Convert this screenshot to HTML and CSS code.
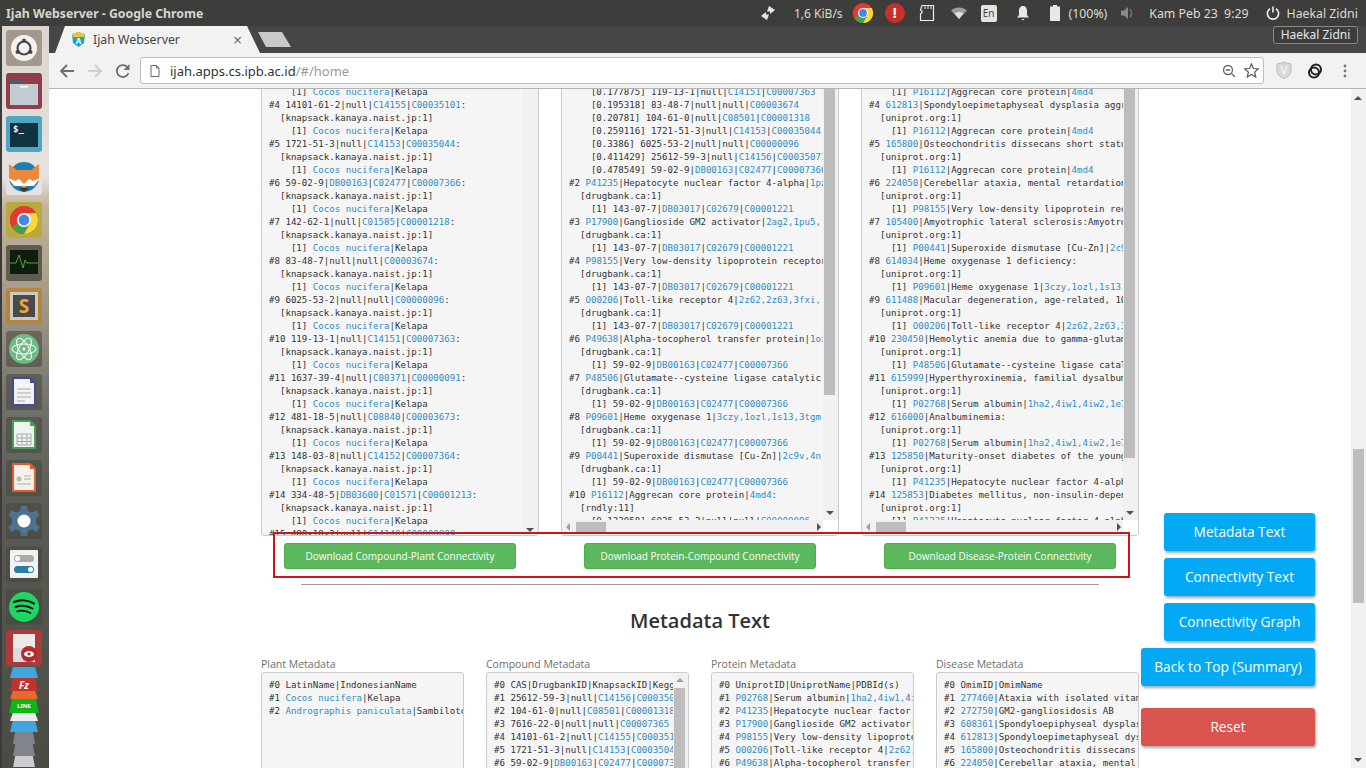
FILE: index.html
```html
<!DOCTYPE html>
<html lang="id">
<head>
	<meta charset="UTF-8">
	<title>Ijah Webserver - Google Chrome</title>
	<link rel="stylesheet" href="styles.css">
</head>
<body>
	<svg class="defs" width="0" height="0">
		<symbol id="chrome-logo" viewBox="0 0 36 36">
			<circle cx="18" cy="18" r="14" fill="#e53935"/>
			<path d="M18 18 L6 25 A14 14 0 0 1 6 11 Z" fill="#e53935"/>
			<path d="M18 18 L5.9 25 A14 14 0 0 0 25 30.1 L31 12 Z" fill="#43a047"/>
			<path d="M18 11 H30.1 A14 14 0 0 1 18 32 L25 20 Z" fill="#fdd835"/>
			<circle cx="18" cy="18" r="7" fill="#fff"/>
			<circle cx="18" cy="18" r="5.4" fill="#4a86e8"/>
		</symbol>
	</svg>

	<!-- ubuntu top panel -->
	<div class="topbar">
		<div class="win-title">Ijah Webserver - Google Chrome</div>
		<div class="indicators">
			<svg class="ind ind-arrows" width="16" height="16" viewBox="0 0 16 16"><path d="M9 1 L15 5 L10 9 V6.5 L7 6.5 Z M7 15 L1 11 L6 7 V9.5 L9 9.5 Z" fill="#e6e6e6"/></svg>
			<span class="ind-text net">1,6 KiB/s</span>
			<svg class="ind ind-chrome" width="26" height="26"><use href="#chrome-logo"/></svg>
			<span class="ind-alert">!</span>
			<svg class="ind ind-sd" width="16" height="18" viewBox="0 0 16 18"><path d="M3 1.5 H14.5 V16.5 H1.5 V10 L3 8.5 V7 L1.5 6 Z" fill="none" stroke="#eee" stroke-width="1.2"/><path d="M6 2 V5 M9 2 V5 M12 2 V5" stroke="#eee"/></svg>
			<svg class="ind ind-wifi" width="16" height="12" viewBox="0 0 16 12"><path d="M0 3.5 C4 -0.5 12 -0.5 16 3.5 L8 12 Z" fill="#9b9b9b"/><path d="M3.5 6.5 C6 4.5 10 4.5 12.5 6.5 L8 12 Z" fill="#e0e0e0"/></svg>
			<span class="ind-lang">En</span>
			<svg class="ind ind-bell" width="14" height="16" viewBox="0 0 14 16"><path d="M7 1 C10 1 11 3.500 11 6 V10 L13 12.500 H1 L3 10 V6 C3 3.500 4 1 7 1 Z M5.500 14 H8.500 L7 15.500 Z" fill="#e8e8e8"/></svg>
			<svg class="ind ind-batt" width="10" height="16" viewBox="0 0 10 16"><path d="M3 0 H7 V1.500 H10 V16 H0 V1.500 H3 Z" fill="#e8e8e8"/></svg>
			<span class="ind-text pct">(100%)</span>
			<svg class="ind ind-vol" width="14" height="14" viewBox="0 0 14 14"><path d="M0 4.500 H3 L7 1 V13 L3 9.500 H0 Z" fill="#8a8a8a"/><path d="M9 3 C11 5 11 9 9 11" stroke="#777" stroke-width="1.400" fill="none"/></svg>
			<span class="ind-text clock">Kam Peb 23&nbsp; 9:29</span>
			<svg class="ind ind-power" width="14" height="14" viewBox="0 0 14 14"><path d="M4 2.800 A5.600 5.600 0 1 0 10 2.800 M7 0.500 V6.500" fill="none" stroke="#eee" stroke-width="1.600"/></svg>
			<span class="ind-text user">Haekal Zidni</span>
		</div>
		<div class="user-tip">Haekal Zidni</div>
	</div>

	<div class="desktop">
		<!-- launcher -->
		<div class="launcher">
			<div class="tile tile-ubuntu"><svg width="36" height="36" viewBox="0 0 36 36"><circle cx="18" cy="18" r="13" fill="#f4f2f0"/><circle cx="18" cy="18" r="6.500" fill="none" stroke="#4c4743" stroke-width="2.200"/><circle cx="18" cy="10.500" r="2" fill="#4c4743"/><circle cx="11.500" cy="22" r="2" fill="#4c4743"/><circle cx="24.500" cy="22" r="2" fill="#4c4743"/></svg></div>
			<div class="tile tile-files"><svg width="36" height="36" viewBox="0 0 36 36"><path d="M4 7 H15 L18 10 H32 V14 H4 Z" fill="#4d5b66"/><path d="M4 11 H32 V32 H4 Z" fill="#c3ccd2"/><rect x="14" y="13" width="8" height="1.500" fill="#fff"/></svg></div>
			<div class="tile tile-term"><svg width="36" height="36" viewBox="0 0 36 36"><rect x="4" y="7" width="28" height="24" fill="#0f3440"/><text x="7" y="16" class="term-txt">$_</text></svg></div>
			<div class="tile tile-fox"><svg width="36" height="36" viewBox="0 0 36 36"><circle cx="18" cy="18" r="15" fill="#1c7fae"/><path d="M3 5 L11 11 H25 L33 5 V20 L18 29 L3 20 Z" fill="#ed8a3a"/><path d="M2 19 L9 22 L13 20 L18 25 L23 20 L27 22 L34 19 L28 27 H8 Z" fill="#fff"/><path d="M13 29 H23 L18 33 Z" fill="#333"/></svg></div>
			<div class="tile tile-chrome"><svg width="36" height="36" viewBox="0 0 36 36"><use href="#chrome-logo"/></svg></div>
			<div class="tile tile-monitor"><svg width="36" height="36" viewBox="0 0 36 36"><rect x="4" y="5" width="28" height="24" rx="1" fill="#0e1d0e"/><path d="M4 18 H10 L13 10 L17 23 L19 15 L21 18 H32" fill="none" stroke="#6cc24a" stroke-width="0.800"/></svg></div>
			<div class="tile tile-sublime"><svg width="36" height="36" viewBox="0 0 36 36"><rect x="4" y="4" width="28" height="28" fill="#c9c9c6"/><rect x="7" y="7" width="22" height="22" fill="#4a4a4a"/><text x="18" y="24.500" class="sublime-txt">S</text></svg></div>
			<div class="tile tile-dark"><svg width="36" height="36" viewBox="0 0 36 36"><circle cx="18" cy="18" r="15" fill="#6fbc87"/><g fill="none" stroke="#fff" stroke-width="1"><ellipse cx="18" cy="18" rx="12" ry="5"/><ellipse cx="18" cy="18" rx="12" ry="5" transform="rotate(60 18 18)"/><ellipse cx="18" cy="18" rx="12" ry="5" transform="rotate(120 18 18)"/></g><circle cx="18" cy="18" r="1.500" fill="#fff"/></svg></div>
			<div class="tile tile-dark"><svg width="36" height="36" viewBox="0 0 36 36"><path d="M7 4 H24 L29 9 V31 H7 Z" fill="#f3f3f6" stroke="#3f4da0" stroke-width="2"/><path d="M24 4 L29 9 H24 Z" fill="#3f4da0"/><path d="M11 15 H25 M11 19 H25 M11 23 H25 M11 27 H19" stroke="#aaa"/></svg></div>
			<div class="tile tile-dark"><svg width="36" height="36" viewBox="0 0 36 36"><path d="M7 4 H24 L29 9 V31 H7 Z" fill="#eef5ee" stroke="#4e9c54" stroke-width="2"/><path d="M24 4 L29 9 H24 Z" fill="#4e9c54"/><path d="M11 17 H25 V28 H11 Z M11 21 H25 M11 24.500 H25 M16 17 V28 M21 17 V28" fill="none" stroke="#aaa"/></svg></div>
			<div class="tile tile-dark"><svg width="36" height="36" viewBox="0 0 36 36"><path d="M7 4 H24 L29 9 V31 H7 Z" fill="#f7f1ee" stroke="#e0602c" stroke-width="2"/><path d="M24 4 L29 9 H24 Z" fill="#e0602c"/><circle cx="13" cy="19" r="2.500" fill="#bbb"/><path d="M18 16 H25 M18 19 H25 M11 24 H25" stroke="#aaa"/></svg></div>
			<div class="tile tile-dark"><svg width="36" height="36" viewBox="0 0 36 36"><path d="M15 3 H21 L22 8 L26 9.500 L30.500 7 L33.500 12 L30 15.500 V20.500 L33.500 24 L30.500 29 L26 26.500 L22 28 L21 33 H15 L14 28 L10 26.500 L5.500 29 L2.500 24 L6 20.500 V15.500 L2.500 12 L5.500 7 L10 9.500 L14 8 Z" fill="#4e7391"/><circle cx="18" cy="18" r="6.500" fill="#fff"/></svg></div>
			<div class="tile tile-dark"><svg width="36" height="36" viewBox="0 0 36 36"><rect x="4" y="4" width="28" height="28" rx="1" fill="#f2f2f2"/><rect x="8" y="9" width="20" height="7" rx="3.500" fill="#a9a9a9"/><circle cx="11.500" cy="12.500" r="2.500" fill="#fff"/><rect x="8" y="20" width="20" height="7" rx="3.500" fill="#2a7da8"/><circle cx="24.500" cy="23.500" r="2.500" fill="#fff"/></svg></div>
			<div class="tile tile-dark"><svg width="36" height="36" viewBox="0 0 36 36"><circle cx="18" cy="18" r="15" fill="#1ed760"/><g fill="none" stroke="#111" stroke-linecap="round"><path d="M8 13 C14 10.500 22 11 28 14.500" stroke-width="2.200"/><path d="M9.500 18 C15 16 21 16.500 26.500 19.500" stroke-width="1.900"/><path d="M11 22.500 C15 21 20 21.500 24.500 24" stroke-width="1.600"/></g></svg></div>
			<div class="tile tile-viewer"><svg width="36" height="36" viewBox="0 0 36 36"><rect x="7" y="4" width="22" height="28" fill="#e9e9e9"/><rect x="7" y="18" width="22" height="14" fill="#dcdcdc"/><circle cx="23" cy="24" r="8" fill="#b52a2a"/><ellipse cx="23" cy="24" rx="5" ry="3" fill="#fff"/><circle cx="23" cy="24" r="1.600" fill="#b52a2a"/></svg></div>
			<!-- icons squashed at the end of the launcher -->
			<div class="stack">
				<div class="stack-item si-blue"></div>
				<div class="stack-item si-red"><span class="fz">Fz</span></div>
				<div class="stack-item si-orange"></div>
				<div class="stack-item si-line"><span class="line-txt">LINE</span></div>
				<div class="stack-item si-white"></div>
				<div class="stack-item si-blue"></div>
				<div class="stack-item si-grey"></div>
				<div class="stack-item si-grey"></div>
				<div class="stack-item si-pale"></div>
			</div>
		</div>

		<div class="browser">
			<div class="tabstrip">
				<div class="tab">
					<svg class="favicon" width="13" height="15" viewBox="0 0 13 15"><path d="M6.500 0 L13 2.300 L12 11 L6.500 15 L1 11 L0 2.300 Z" fill="#1fa3c4"/><path d="M6.500 0 L0 2.300 L1.200 5 H11.800 L13 2.300 Z" fill="#f2c230"/><text x="6.500" y="11.500" class="favicon-txt">A</text></svg>
					<span class="tab-title">Ijah Webserver</span>
					<span class="tab-close">×</span>
				</div>
				<div class="newtab"></div>
			</div>

			<div class="toolbar">
				<svg class="tb-icon" width="16" height="16" viewBox="0 0 16 16"><path d="M15 8 H2 M8 2 L2 8 L8 14" fill="none" stroke="#6e6e6e" stroke-width="1.800"/></svg>
				<svg class="tb-icon" width="16" height="16" viewBox="0 0 16 16"><path d="M1 8 H14 M8 2 L14 8 L8 14" fill="none" stroke="#cfcfcf" stroke-width="1.800"/></svg>
				<svg class="tb-icon" width="16" height="16" viewBox="0 0 16 16"><path d="M13.500 10 A6 6 0 1 1 13 5" fill="none" stroke="#6e6e6e" stroke-width="1.800"/><path d="M14.500 1 V7 H8.500 Z" fill="#6e6e6e"/></svg>
				<div class="omnibox">
					<svg width="10" height="12" viewBox="0 0 10 12"><path d="M1 .5 H6.500 L9 3 V11.500 H1 Z M6.500 .5 V3 H9" fill="none" stroke="#666"/></svg>
					<span class="url">ijah.apps.cs.ipb.ac.id<span class="url-path">/#/home</span></span>
					<svg class="omni-zoom" width="14" height="14" viewBox="0 0 14 14"><circle cx="6" cy="6" r="4.500" fill="none" stroke="#666" stroke-width="1.300"/><path d="M9.500 9.500 L13 13 M3.800 6 H8.200" stroke="#666" stroke-width="1.300"/></svg>
					<svg class="omni-star" width="15" height="15" viewBox="0 0 15 15"><path d="M7.500 1 L9.400 5.500 L14.300 5.900 L10.600 9.100 L11.700 13.900 L7.500 11.400 L3.300 13.900 L4.400 9.100 L.7 5.900 L5.600 5.500 Z" fill="none" stroke="#555" stroke-width="1.200"/></svg>
				</div>
				<svg class="ext ext-shield" width="16" height="17" viewBox="0 0 16 17"><path d="M1 2 L8 0.500 L15 2 V9 C15 13 11 15.500 8 16.500 C5 15.500 1 13 1 9 Z" fill="#d9d9d9" stroke="#bbb"/><path d="M5 4 L8 12 L11 4" fill="none" stroke="#f4f4f4" stroke-width="1.500"/></svg>
				<svg class="ext ext-link" width="16" height="16" viewBox="0 0 16 16"><circle cx="9" cy="6.500" r="5" fill="none" stroke="#222" stroke-width="2"/><circle cx="7" cy="9.500" r="5" fill="none" stroke="#222" stroke-width="2"/></svg>
				<svg class="ext ext-menu" width="4" height="14" viewBox="0 0 4 14"><circle cx="2" cy="2" r="1.400" fill="#777"/><circle cx="2" cy="7" r="1.400" fill="#777"/><circle cx="2" cy="12" r="1.400" fill="#777"/></svg>
			</div>

			<div class="page">
				<div class="page-body">
					<div class="content">
						<div class="conn-row">
							<div class="panel">
<pre class="panel-text">    [1] <a>Cocos nucifera</a>|Kelapa
#4 14101-61-2|null|<a>C14155</a>|<a>C00035101</a>:
  [knapsack.kanaya.naist.jp:1]
    [1] <a>Cocos nucifera</a>|Kelapa
#5 1721-51-3|null|<a>C14153</a>|<a>C00035044</a>:
  [knapsack.kanaya.naist.jp:1]
    [1] <a>Cocos nucifera</a>|Kelapa
#6 59-02-9|<a>DB00163</a>|<a>C02477</a>|<a>C00007366</a>:
  [knapsack.kanaya.naist.jp:1]
    [1] <a>Cocos nucifera</a>|Kelapa
#7 142-62-1|null|<a>C01585</a>|<a>C00001218</a>:
  [knapsack.kanaya.naist.jp:1]
    [1] <a>Cocos nucifera</a>|Kelapa
#8 83-48-7|null|null|<a>C00003674</a>:
  [knapsack.kanaya.naist.jp:1]
    [1] <a>Cocos nucifera</a>|Kelapa
#9 6025-53-2|null|null|<a>C00000096</a>:
  [knapsack.kanaya.naist.jp:1]
    [1] <a>Cocos nucifera</a>|Kelapa
#10 119-13-1|null|<a>C14151</a>|<a>C00007363</a>:
  [knapsack.kanaya.naist.jp:1]
    [1] <a>Cocos nucifera</a>|Kelapa
#11 1637-39-4|null|<a>C00371</a>|<a>C00000091</a>:
  [knapsack.kanaya.naist.jp:1]
    [1] <a>Cocos nucifera</a>|Kelapa
#12 481-18-5|null|<a>C08840</a>|<a>C00003673</a>:
  [knapsack.kanaya.naist.jp:1]
    [1] <a>Cocos nucifera</a>|Kelapa
#13 148-03-8|null|<a>C14152</a>|<a>C00007364</a>:
  [knapsack.kanaya.naist.jp:1]
    [1] <a>Cocos nucifera</a>|Kelapa
#14 334-48-5|<a>DB03600</a>|<a>C01571</a>|<a>C00001213</a>:
  [knapsack.kanaya.naist.jp:1]
    [1] <a>Cocos nucifera</a>|Kelapa
#15 480-18-2|null|<a>C14148</a>|<a>C00000899</a></pre>
								<div class="vscroll vscroll-bare"><span class="arrow-down"></span></div>
							</div>
							<div class="panel panel-h">
<pre class="panel-text">    [0.177875] 119-13-1|null|<a>C14151</a>|<a>C00007363</a>
    [0.195318] 83-48-7|null|null|<a>C00003674</a>
    [0.20781] 104-61-0|null|<a>C08501</a>|<a>C00001318</a>
    [0.259116] 1721-51-3|null|<a>C14153</a>|<a>C00035044</a>
    [0.3386] 6025-53-2|null|null|<a>C00000096</a>
    [0.411429] 25612-59-3|null|<a>C14156</a>|<a>C00035071</a>
    [0.478549] 59-02-9|<a>DB00163</a>|<a>C02477</a>|<a>C00007366</a>
#2 <a>P41235</a>|Hepatocyte nuclear factor 4-alpha|<a>1pzl</a>:
  [drugbank.ca:1]
    [1] 143-07-7|<a>DB03017</a>|<a>C02679</a>|<a>C00001221</a>
#3 <a>P17900</a>|Ganglioside GM2 activator|<a>2ag2,1pu5,</a>
  [drugbank.ca:1]
    [1] 143-07-7|<a>DB03017</a>|<a>C02679</a>|<a>C00001221</a>
#4 <a>P98155</a>|Very low-density lipoprotein receptor:
  [drugbank.ca:1]
    [1] 143-07-7|<a>DB03017</a>|<a>C02679</a>|<a>C00001221</a>
#5 <a>O00206</a>|Toll-like receptor 4|<a>2z62,2z63,3fxi,</a>
  [drugbank.ca:1]
    [1] 143-07-7|<a>DB03017</a>|<a>C02679</a>|<a>C00001221</a>
#6 <a>P49638</a>|Alpha-tocopherol transfer protein|<a>1oip</a>
  [drugbank.ca:1]
    [1] 59-02-9|<a>DB00163</a>|<a>C02477</a>|<a>C00007366</a>
#7 <a>P48506</a>|Glutamate--cysteine ligase catalytic
  [drugbank.ca:1]
    [1] 59-02-9|<a>DB00163</a>|<a>C02477</a>|<a>C00007366</a>
#8 <a>P09601</a>|Heme oxygenase 1|<a>3czy,1ozl,1s13,3tgm</a>
  [drugbank.ca:1]
    [1] 59-02-9|<a>DB00163</a>|<a>C02477</a>|<a>C00007366</a>
#9 <a>P00441</a>|Superoxide dismutase [Cu-Zn]|<a>2c9v,4n</a>
  [drugbank.ca:1]
    [1] 59-02-9|<a>DB00163</a>|<a>C02477</a>|<a>C00007366</a>
#10 <a>P16112</a>|Aggrecan core protein|<a>4md4</a>:
  [rndly:11]
    [0.133058] 6025-53-2|null|null|<a>C00000096</a></pre>
								<div class="vscroll"><div class="vthumb vthumb-mid"></div><span class="arrow-down"></span></div>
								<div class="hscroll"><span class="arrow-left"></span><div class="hthumb"></div><span class="arrow-right"></span></div>
								<div class="corner"></div>
							</div>
							<div class="panel panel-h">
<pre class="panel-text">    [1] <a>P16112</a>|Aggrecan core protein|<a>4md4</a>
#4 <a>612813</a>|Spondyloepimetaphyseal dysplasia aggrecan
  [uniprot.org:1]
    [1] <a>P16112</a>|Aggrecan core protein|<a>4md4</a>
#5 <a>165800</a>|Osteochondritis dissecans short stature
  [uniprot.org:1]
    [1] <a>P16112</a>|Aggrecan core protein|<a>4md4</a>
#6 <a>224050</a>|Cerebellar ataxia, mental retardation
  [uniprot.org:1]
    [1] <a>P98155</a>|Very low-density lipoprotein receptor
#7 <a>105400</a>|Amyotrophic lateral sclerosis:Amyotrophic
  [uniprot.org:1]
    [1] <a>P00441</a>|Superoxide dismutase [Cu-Zn]|<a>2c9v</a>
#8 <a>614034</a>|Heme oxygenase 1 deficiency:
  [uniprot.org:1]
    [1] <a>P09601</a>|Heme oxygenase 1|<a>3czy,1ozl,1s13,3tgm</a>
#9 <a>611488</a>|Macular degeneration, age-related, 10
  [uniprot.org:1]
    [1] <a>O00206</a>|Toll-like receptor 4|<a>2z62,2z63,3fxi</a>
#10 <a>230450</a>|Hemolytic anemia due to gamma-glutamyl
  [uniprot.org:1]
    [1] <a>P48506</a>|Glutamate--cysteine ligase catalytic
#11 <a>615999</a>|Hyperthyroxinemia, familial dysalbuminemic
  [uniprot.org:1]
    [1] <a>P02768</a>|Serum albumin|<a>1ha2,4iw1,4iw2,1e78</a>
#12 <a>616000</a>|Analbuminemia:
  [uniprot.org:1]
    [1] <a>P02768</a>|Serum albumin|<a>1ha2,4iw1,4iw2,1e78</a>
#13 <a>125850</a>|Maturity-onset diabetes of the young
  [uniprot.org:1]
    [1] <a>P41235</a>|Hepatocyte nuclear factor 4-alpha
#14 <a>125853</a>|Diabetes mellitus, non-insulin-dependent
  [uniprot.org:1]
    [1] <a>P41235</a>|Hepatocyte nuclear factor 4-alpha</pre>
								<div class="vscroll"><div class="vthumb vthumb-long"></div><span class="arrow-down"></span></div>
								<div class="hscroll"><span class="arrow-left"></span><div class="hthumb"></div><span class="arrow-right"></span></div>
								<div class="corner"></div>
							</div>
						</div>

						<div class="download-row">
							<div class="download-cell"><button class="btn-green">Download Compound-Plant Connectivity</button></div>
							<div class="download-cell"><button class="btn-green">Download Protein-Compound Connectivity</button></div>
							<div class="download-cell"><button class="btn-green">Download Disease-Protein Connectivity</button></div>
							<div class="red-mark"></div>
						</div>

						<div class="divider"></div>
						<h2 class="section-title">Metadata Text</h2>

						<div class="meta-row">
							<div class="meta-col">
								<div class="meta-label">Plant Metadata</div>
								<div class="meta-box">
<pre class="meta-text">#0 LatinName|IndonesianName
#1 <a>Cocos nucifera</a>|Kelapa
#2 <a>Andrographis paniculata</a>|Sambiloto</pre>
								</div>
							</div>
							<div class="meta-col">
								<div class="meta-label">Compound Metadata</div>
								<div class="meta-box">
<pre class="meta-text">#0 CAS|DrugbankID|KnapsackID|KeggID
#1 25612-59-3|null|<a>C14156</a>|<a>C00035071</a>
#2 104-61-0|null|<a>C08501</a>|<a>C00001318</a>
#3 7616-22-0|null|null|<a>C00007365</a>
#4 14101-61-2|null|<a>C14155</a>|<a>C00035101</a>
#5 1721-51-3|null|<a>C14153</a>|<a>C00035044</a>
#6 59-02-9|<a>DB00163</a>|<a>C02477</a>|<a>C00007366</a></pre>
									<div class="vscroll vscroll-meta"><span class="arrow-up"></span><div class="vthumb vthumb-meta"></div></div>
								</div>
							</div>
							<div class="meta-col">
								<div class="meta-label">Protein Metadata</div>
								<div class="meta-box">
<pre class="meta-text">#0 UniprotID|UniprotName|PDBId(s)
#1 <a>P02768</a>|Serum albumin|<a>1ha2,4iw1,4iw2</a>
#2 <a>P41235</a>|Hepatocyte nuclear factor 4-alpha
#3 <a>P17900</a>|Ganglioside GM2 activator|<a>2ag2</a>
#4 <a>P98155</a>|Very low-density lipoprotein receptor
#5 <a>O00206</a>|Toll-like receptor 4|<a>2z62,2z63</a>
#6 <a>P49638</a>|Alpha-tocopherol transfer protein</pre>
								</div>
							</div>
							<div class="meta-col">
								<div class="meta-label">Disease Metadata</div>
								<div class="meta-box">
<pre class="meta-text">#0 OmimID|OmimName
#1 <a>277460</a>|Ataxia with isolated vitamin E
#2 <a>272750</a>|GM2-gangliosidosis AB
#3 <a>608361</a>|Spondyloepiphyseal dysplasia
#4 <a>612813</a>|Spondyloepimetaphyseal dysplasia
#5 <a>165800</a>|Osteochondritis dissecans short
#6 <a>224050</a>|Cerebellar ataxia, mental retardation</pre>
								</div>
							</div>
						</div>
					</div>
				</div>

				<div class="page-scroll">
					<span class="arrow-up"></span>
					<div class="page-thumb"></div>
					<span class="arrow-down"></span>
				</div>

				<!-- floating nav -->
				<div class="float-nav">
					<button class="btn-float">Metadata Text</button>
					<button class="btn-float">Connectivity Text</button>
					<button class="btn-float">Connectivity Graph</button>
					<button class="btn-float btn-wide">Back to Top (Summary)</button>
					<button class="btn-float btn-wide btn-reset">Reset</button>
				</div>
			</div>
		</div>
	</div>
</body>
</html>
```

FILE: styles.css
```css
* {
	margin: 0;
	padding: 0;
	box-sizing: border-box;
}

html, body {
	width: 1366px;
	height: 768px;
	overflow: hidden;
}

body {
	display: flex;
	flex-direction: column;
	font-family: "Noto Sans", "Open Sans", sans-serif;
	background: #fff;
}

.defs {
	position: absolute;
}

/* top panel */
.topbar {
	position: relative;
	flex: 0 0 26px;
	display: flex;
	align-items: center;
	background: #3d3d3b;
	color: #dfdbd2;
	font-size: 12px;
}

.win-title {
	padding-left: 6px;
	font-weight: 700;
	font-size: 12.3px;
	color: #d8d5cd;
}

.indicators {
	position: absolute;
	left: 0;
	top: 0;
	width: 100%;
	height: 26px;
	display: flex;
	align-items: center;
	padding-left: 760px;
}

.ind-text {
	white-space: nowrap;
	font-size: 12.3px;
}

.net { margin-left: 18px; font-size: 12px; }
.ind-chrome { margin-left: 7px; }
.ind-alert {
	width: 20px;
	height: 20px;
	margin-left: 9px;
	border-radius: 50%;
	background: #c9302c;
	color: #fff;
	font-size: 14px;
	font-weight: 700;
	line-height: 20px;
	text-align: center;
}
.ind-sd { margin-left: 14px; }
.ind-wifi { margin-left: 16px; }
.ind-lang {
	width: 16px;
	height: 17px;
	margin-left: 14px;
	background: #e4e4e4;
	border-radius: 2px;
	color: #444;
	font-size: 10px;
	line-height: 17px;
	text-align: center;
}
.ind-bell { margin-left: 19px; }
.ind-batt { margin-left: 20px; }
.pct { margin-left: 9px; }
.ind-vol { margin-left: 14px; }
.clock { margin-left: 14px; }
.ind-power { margin-left: 17px; }
.user { margin-left: 7px; }

.user-tip {
	position: absolute;
	left: 1273px;
	top: 26px;
	width: 85px;
	height: 18px;
	z-index: 3;
	border: 1px solid #8a8a8a;
	border-radius: 3px;
	background: #3d3d3b;
	color: #e8e8e8;
	font-size: 12px;
	line-height: 16px;
	text-align: center;
}

.desktop {
	flex: 1;
	display: flex;
	min-height: 0;
}

/* launcher */
.launcher {
	flex: 0 0 49px;
	display: flex;
	flex-direction: column;
	align-items: center;
	gap: 7px;
	padding: 4px 3px 0 0;
	overflow: hidden;
	background: linear-gradient(to bottom, #dcd5cf 0, #e6e2df 150px, #c4b49c 180px, #9c9584 290px, #70716a 380px, #5a5c53 480px, #4a4b43 742px);
	border-left: 2px solid #3b3b3b;
}

.tile {
	flex: 0 0 36px;
	width: 36px;
	height: 36px;
	border-radius: 3px;
	display: flex;
	align-items: center;
	justify-content: center;
}

.tile-ubuntu { background: #a4988c; }
.tile-files { background: #903e4c; }
.tile-term { background: #4fa5c2; }
.tile-fox { background: #e6e1de; }
.tile-chrome { background: #b8aa3c; }
.tile-monitor { background: #5e5b50; }
.tile-sublime { background: #b5853b; }
.tile-dark { background: rgba(70, 70, 64, 0.55); }
.tile-viewer { background: #ac3a3a; margin-top: -2px; }

.term-txt {
	font: 700 9px "DejaVu Sans Mono", monospace;
	fill: #fff;
}

.sublime-txt {
	font: 700 19px "Noto Sans", sans-serif;
	fill: #f0a53a;
	text-anchor: middle;
}

.stack {
	margin-top: -6px;
	display: flex;
	flex-direction: column;
	align-items: center;
	width: 36px;
}

.stack-item {
	width: 28px;
	height: 11px;
	clip-path: polygon(10% 0, 90% 0, 100% 100%, 0 100%);
	display: flex;
	align-items: center;
	justify-content: center;
	overflow: hidden;
}

.si-blue { background: #41a5e0; }
.si-red { background: #c1322c; height: 13px; }
.si-orange { background: #e56a2c; height: 8px; }
.si-line { background: #10b418; height: 14px; width: 30px; }
.si-white { background: #ececec; height: 8px; }
.si-grey { background: #7f858a; width: 22px; height: 12px; }
.si-pale { background: #cdcdcd; width: 22px; }

.fz {
	color: #fff;
	font-size: 10px;
	font-weight: 700;
	font-style: italic;
}

.line-txt {
	color: #fff;
	font-size: 6px;
	font-weight: 700;
}

/* chrome */
.browser {
	flex: 1;
	display: flex;
	flex-direction: column;
	min-width: 0;
}

.tabstrip {
	flex: 0 0 27px;
	display: flex;
	background: #464646;
	padding-left: 6px;
}

.tab {
	width: 205px;
	height: 27px;
	display: flex;
	align-items: center;
	padding-left: 17px;
	background: #f2f2f2;
	clip-path: polygon(10px 0, 192px 0, 205px 100%, 0 100%);
}

.favicon {
	flex: none;
}

.favicon-txt {
	font: 700 8px "Noto Sans", sans-serif;
	fill: #fff;
	text-anchor: middle;
}

.tab-title {
	margin-left: 8px;
	font-size: 12.3px;
	color: #444;
}

.tab-close {
	margin-left: 53px;
	font-size: 16px;
	line-height: 16px;
	color: #777;
}

.newtab {
	width: 33px;
	height: 15px;
	margin: 6px 0 0 -2px;
	background: #c9c9c9;
	clip-path: polygon(0 0, 24px 0, 33px 100%, 8px 100%);
}

.toolbar {
	flex: 0 0 36px;
	display: flex;
	align-items: center;
	background: #f2f2f2;
	border-bottom: 1px solid #b4b4b4;
	padding-left: 10px;
}

.tb-icon {
	flex: none;
	margin-right: 12px;
}

.omnibox {
	width: 1124px;
	height: 27px;
	margin-left: -3px;
	display: flex;
	align-items: center;
	padding: 0 4px 0 9px;
	background: #fff;
	border: 1px solid #bdbdbd;
	border-radius: 3px;
}

.url {
	margin-left: 10px;
	font-size: 13px;
	color: #333;
	flex: 1;
}

.url-path {
	color: #999;
}

.omni-zoom {
	margin-right: 8px;
}

.ext-shield { margin-left: 12px; }
.ext-link { margin-left: 15px; }
.ext-menu { margin-left: 20px; }

/* page */
.page {
	position: relative;
	flex: 1;
	display: flex;
	min-height: 0;
	overflow: hidden;
	background: #fff;
}

.page-body {
	flex: 1;
	min-width: 0;
	display: flex;
	justify-content: center;
}

.content {
	width: 878px;
	margin-top: -4px;
}

.conn-row {
	display: grid;
	grid-template-columns: repeat(3, 278px);
	column-gap: 22px;
}

.panel {
	height: 451px;
	display: grid;
	grid-template-columns: 1fr 15px;
	grid-template-rows: 1fr;
	background: #f5f5f5;
	border: 1px solid #ccc;
	border-radius: 3px;
	overflow: hidden;
}

.panel-h {
	grid-template-rows: 1fr 15px;
}

pre {
	font-family: "DejaVu Sans Mono", "Liberation Mono", monospace;
	font-size: 9.1px;
	line-height: 13px;
	color: #333;
	overflow: hidden;
	white-space: pre;
}

pre a {
	color: #2f8dc4;
}

.panel-text {
	padding: 0 0 0 7px;
	min-width: 0;
}

.vscroll {
	position: relative;
	background: #f1f1f1;
}

.vthumb {
	width: 11px;
	margin-left: 1px;
	background: #bdbdbd;
}

.vthumb-mid { height: 309px; }
.vthumb-long { height: 372px; }

.hscroll {
	position: relative;
	display: flex;
	align-items: center;
	background: #f1f1f1;
}

.hthumb {
	position: absolute;
	left: 14px;
	top: 2px;
	width: 30px;
	height: 10px;
	background: #bdbdbd;
}

.corner {
	background: #fff;
}

.arrow-down,
.arrow-up,
.arrow-left,
.arrow-right {
	position: absolute;
	width: 0;
	height: 0;
}

.arrow-down {
	left: 3px;
	bottom: 5px;
	border-left: 4px solid transparent;
	border-right: 4px solid transparent;
	border-top: 4px solid #505050;
}

.vscroll-bare .arrow-down {
	bottom: 3px;
}

.arrow-up {
	left: 3px;
	top: 5px;
	border-left: 4px solid transparent;
	border-right: 4px solid transparent;
	border-bottom: 4px solid #a0a0a0;
}

.arrow-left {
	left: 4px;
	top: 3px;
	border-top: 4px solid transparent;
	border-bottom: 4px solid transparent;
	border-right: 4px solid #a0a0a0;
}

.arrow-right {
	right: 2px;
	top: 3px;
	border-top: 4px solid transparent;
	border-bottom: 4px solid transparent;
	border-left: 4px solid #505050;
}

.download-row {
	position: relative;
	display: grid;
	grid-template-columns: repeat(3, 278px);
	column-gap: 22px;
	margin-top: 7px;
}

.download-cell {
	display: flex;
	justify-content: center;
}

.btn-green {
	width: 232px;
	height: 26px;
	border: 1px solid #4cae4c;
	border-radius: 3px;
	background: #5cb85c;
	color: #fff;
	font-family: "Open Sans", sans-serif;
	font-size: 10px;
}

/* red box drawn over the screenshot */
.red-mark {
	position: absolute;
	left: 12px;
	top: -11px;
	width: 857px;
	height: 46px;
	border: 2px solid #cf1418;
}

.divider {
	width: 798px;
	margin: 15px auto 0;
	border-top: 1px solid #999;
}

.section-title {
	margin-top: 22px;
	font-family: "Open Sans", sans-serif;
	font-size: 20px;
	line-height: 28px;
	font-weight: 600;
	color: #333;
	text-align: center;
}

.meta-row {
	display: grid;
	grid-template-columns: repeat(4, 203px);
	column-gap: 22px;
	margin-top: 21px;
}

.meta-label {
	height: 16px;
	font-family: "Open Sans", sans-serif;
	font-size: 10.5px;
	line-height: 16px;
	color: #6e6e6e;
}

.meta-box {
	height: 120px;
	display: flex;
	background: #f5f5f5;
	border: 1px solid #ccc;
	border-radius: 3px;
	overflow: hidden;
}

.meta-text {
	flex: 1;
	min-width: 0;
	padding: 6px 0 0 7px;
}

.vscroll-meta {
	flex: 0 0 15px;
}

.vthumb-meta {
	margin-top: 15px;
	height: 100px;
}

/* page scrollbar */
.page-scroll {
	position: relative;
	flex: 0 0 15px;
	background: #f1f1f1;
}

.page-scroll .arrow-up {
	top: 7px;
	border-bottom-color: #505050;
}

.page-scroll .arrow-down {
	bottom: 6px;
}

.page-thumb {
	width: 11px;
	height: 154px;
	margin: 360px 0 0 2px;
	background: #bdbdbd;
}

/* floating nav */
.float-nav {
	position: absolute;
	right: 51px;
	bottom: 22px;
	display: flex;
	flex-direction: column;
	align-items: flex-end;
	gap: 7px;
}

.btn-float {
	width: 151px;
	height: 38px;
	padding-bottom: 2px;
	border: 0;
	border-radius: 3px;
	background: #03a9f4;
	color: #fff;
	font-family: "Open Sans", sans-serif;
	font-size: 13.7px;
	box-shadow: 1px 2px 3px rgba(0, 0, 0, 0.35);
}

.btn-wide {
	width: 174px;
}

.btn-reset {
	margin-top: 15px;
	background: #d9534f;
}
```
